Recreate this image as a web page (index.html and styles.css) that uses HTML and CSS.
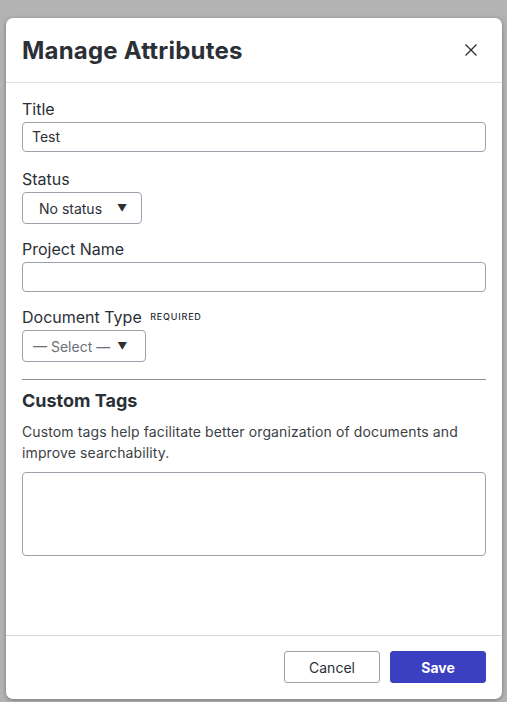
FILE: index.html
```html
<!DOCTYPE html>
<html>
<head>
<meta charset="utf-8">
<link rel="stylesheet" href="styles.css">
</head>
<body>
<div class="modal">
  <div class="modal-header">
    <h1 class="modal-title">Manage Attributes</h1>
    <button class="close-btn" aria-label="Close">
      <svg width="12" height="12" viewBox="0 0 12 12"><path d="M0.5 0.5 L11.5 11.5 M11.5 0.5 L0.5 11.5" stroke="#2b2f36" stroke-width="1.3" fill="none"/></svg>
    </button>
  </div>
  <div class="modal-body">
    <div class="field">
      <label class="label">Title</label>
      <div class="input">Test</div>
    </div>
    <div class="field field-select">
      <label class="label">Status</label>
      <div class="select select-status"><span>No status</span><span class="caret">▼</span></div>
    </div>
    <div class="field field-tight">
      <label class="label">Project Name</label>
      <div class="input"></div>
    </div>
    <div class="field field-select">
      <label class="label">Document Type <span class="required">REQUIRED</span></label>
      <div class="select select-doc"><span class="placeholder">— Select —</span><span class="caret">▼</span></div>
    </div>
    <hr class="divider">
    <h2 class="section-title">Custom Tags</h2>
    <p class="section-desc">Custom tags help facilitate better organization of documents and improve searchability.</p>
    <div class="textarea"></div>
  </div>
  <div class="modal-footer">
    <button class="btn btn-cancel">Cancel</button>
    <button class="btn btn-save">Save</button>
  </div>
</div>
</body>
</html>
```
FILE: styles.css
```css
* { box-sizing: border-box; }
html, body { margin: 0; padding: 0; }
body {
  background: #b3b3b3;
  font-family: Inter, "Liberation Sans", sans-serif;
  color: #2b2f36;
  width: 507px;
  height: 702px;
  overflow: hidden;
  padding: 18px 0 0 6px;
}
.modal {
  width: 496px;
  height: 681px;
  background: #fff;
  border-radius: 7px;
  box-shadow: 0 1px 4px rgba(0,0,0,0.35);
  display: flex;
  flex-direction: column;
}
.modal-header {
  height: 65px;
  border-bottom: 1px solid #dfe1e8;
  display: flex;
  align-items: center;
  justify-content: space-between;
  padding: 0 25px 0 16px;
}
.modal-title {
  margin: 0;
  font-size: 24px;
  font-weight: 700;
  color: #2b2f36;
  letter-spacing: 0.2px;
}
.close-btn {
  border: 0;
  background: none;
  padding: 0;
  width: 12px;
  height: 12px;
  display: flex;
}
.modal-body {
  flex: 1;
  padding: 16px 16px 0 16px;
  display: flex;
  flex-direction: column;
}
.field {
  display: flex;
  flex-direction: column;
  align-items: flex-start;
  margin-bottom: 17px;
}
.field-tight { margin-bottom: 15px; }
.field-select { margin-bottom: 15px; }
.label {
  display: block;
  height: 20px;
  font-size: 16px;
  line-height: 20px;
  color: #2b2f36;
  margin-bottom: 3px;
  white-space: nowrap;
}
.required {
  font-size: 9px;
  line-height: 0;
  letter-spacing: 0.8px;
  font-weight: 500;
  vertical-align: 3px;
  margin-left: 4px;
}
.input {
  align-self: stretch;
  height: 30px;
  border: 1px solid #9ba0aa;
  border-radius: 4px;
  font-size: 14px;
  line-height: 28px;
  padding: 0 9px;
  color: #2b2f36;
}
.select {
  height: 32px;
  border: 1px solid #9ba0aa;
  border-radius: 4px;
  display: flex;
  align-items: center;
  font-size: 14px;
  color: #2b2f36;
}
.select-status { width: 120px; padding-left: 16px; }
.select-status .caret { margin-left: 15px; }
.select-doc { width: 124px; padding-left: 10px; }
.select-doc .caret { margin-left: 7px; }
.placeholder { color: #6b7079; }
.caret { font-size: 10px; color: #2b2f36; }
.divider {
  border: 0;
  border-top: 1px solid #8f9399;
  margin: 2px 0 9px 0;
  width: 100%;
}
.section-title {
  margin: 0 0 8px 0;
  font-size: 18px;
  line-height: 24px;
  font-weight: 700;
}
.section-desc {
  margin: 0 0 9px 0;
  font-size: 14px;
  line-height: 21px;
  letter-spacing: 0.12px;
  color: #3b3f46;
}
.textarea {
  height: 84px;
  border: 1px solid #9ba0aa;
  border-radius: 4px;
}
.modal-footer {
  border-top: 1px solid #d5d8e0;
  padding: 15px 16px 16px 16px;
  display: flex;
  justify-content: flex-end;
  gap: 10px;
}
.btn {
  height: 32px;
  border-radius: 3px;
  font-family: Inter, "Liberation Sans", sans-serif;
  font-size: 14px;
}
.btn-cancel {
  width: 96px;
  background: #fff;
  border: 1px solid #9ba0aa;
  color: #2b2f36;
}
.btn-save {
  width: 96px;
  background: #3b40c1;
  border: 1px solid #3b40c1;
  color: #fff;
  font-weight: 700;
}
```
